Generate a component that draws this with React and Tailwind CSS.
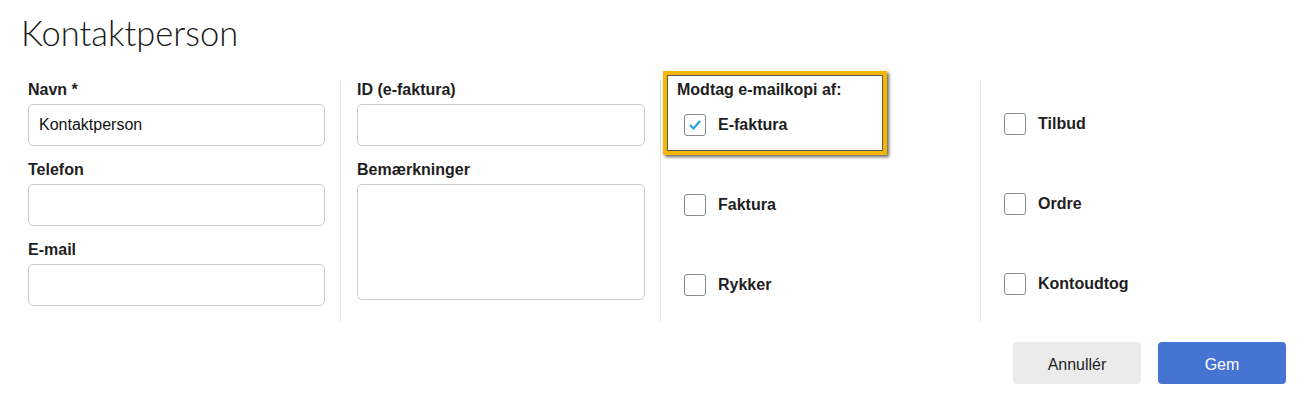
import React, { useState } from "react";

function Check({ checked, onChange, label }) {
  return (
    <label className="flex h-[22px] items-center gap-3 cursor-pointer">
      <span
        onClick={onChange}
        className="flex h-[22px] w-[22px] shrink-0 items-center justify-center rounded-[3px] border-[1.5px] border-[#8a8a8a] bg-white"
      >
        {checked && (
          <svg width="14" height="14" viewBox="0 0 14 14">
            <path d="M2.5 7.5 L5.5 10.5 L11.5 3.5" fill="none" stroke="#29a3e2" strokeWidth="2.2" strokeLinecap="round" strokeLinejoin="round" />
          </svg>
        )}
      </span>
      <span className="text-[16px] font-bold text-[#1e1e1e]">{label}</span>
    </label>
  );
}

function Field({ label, value = "", onChange, area }) {
  return (
    <div className="mb-[14px]">
      <div className="mb-1 text-[16px] font-bold leading-5 text-[#1e1e1e]">{label}</div>
      {area ? (
        <textarea
          value={value}
          onChange={onChange}
          className="block h-[116px] w-full resize-none rounded-[5px] border border-[#cccccc] px-[10px] py-2 text-[16px] outline-none"
        />
      ) : (
        <input
          value={value}
          onChange={onChange}
          className="block h-[42px] w-full rounded-[5px] border border-[#cccccc] px-[10px] text-[16px] text-[#111] outline-none"
        />
      )}
    </div>
  );
}

export default function App() {
  const [form, setForm] = useState({ navn: "Kontaktperson", telefon: "", email: "", id: "", note: "" });
  const [copies, setCopies] = useState({
    efaktura: true,
    faktura: false,
    rykker: false,
    tilbud: false,
    ordre: false,
    kontoudtog: false,
  });

  const toggle = (k) => setCopies({ ...copies, [k]: !copies[k] });
  const set = (k) => (e) => setForm({ ...form, [k]: e.target.value });

  return (
    <div className="h-[409px] w-[1306px] overflow-hidden bg-white font-['Liberation_Sans',Arial,sans-serif] text-[#1e1e1e]">
      {/* Header */}
      <h1 className="pl-[21px] pt-[13px] font-['Lato',sans-serif] text-[34.5px] font-light leading-[40px] text-[#1a1a1a]">
        Kontaktperson
      </h1>

      {/* Columns */}
      <div className="mt-[27px] flex pl-[12px]">
        <div className="h-[242px] w-[328px] pl-4 pr-[15px]">
          <Field label="Navn *" value={form.navn} onChange={set("navn")} />
          <Field label="Telefon" value={form.telefon} onChange={set("telefon")} />
          <Field label="E-mail" value={form.email} onChange={set("email")} />
        </div>

        <div className="h-[242px] w-[320px] border-l border-[#e3e3e3] pl-4 pr-[15px]">
          <Field label="ID (e-faktura)" value={form.id} onChange={set("id")} />
          <Field label="Bemærkninger" value={form.note} onChange={set("note")} area />
        </div>

        <div className="h-[242px] w-[320px] border-l border-[#e3e3e3] pl-[2px]">
          <div className="-mt-[9px] h-[84px] w-[224px] border-4 border-[#f7b500] pl-[10px] pt-[5px] shadow-[inset_0_0_0_1px_rgba(0,0,0,0.65),2px_2px_3px_rgba(0,0,0,0.6)]">
            <div className="text-[16px] font-bold leading-5">Modtag e-mailkopi af:</div>
            <div className="mt-[14px] pl-[7px]">
              <Check label="E-faktura" checked={copies.efaktura} onChange={() => toggle("efaktura")} />
            </div>
          </div>
          <div className="mt-[39px] flex flex-col gap-[58px] pl-[21px]">
            <Check label="Faktura" checked={copies.faktura} onChange={() => toggle("faktura")} />
            <Check label="Rykker" checked={copies.rykker} onChange={() => toggle("rykker")} />
          </div>
        </div>

        <div className="h-[242px] w-[320px] border-l border-[#e3e3e3] pl-[23px] pt-[33px]">
          <div className="flex flex-col gap-[58px]">
            <Check label="Tilbud" checked={copies.tilbud} onChange={() => toggle("tilbud")} />
            <Check label="Ordre" checked={copies.ordre} onChange={() => toggle("ordre")} />
            <Check label="Kontoudtog" checked={copies.kontoudtog} onChange={() => toggle("kontoudtog")} />
          </div>
        </div>
      </div>

      {/* Actions */}
      <div className="mt-[20px] flex justify-end gap-[17px] pr-[20px]">
        <button className="h-[42px] w-[128px] rounded-[4px] bg-[#ebebeb] pt-[3px] text-[16px] text-[#1e1e1e]">Annullér</button>
        <button className="h-[42px] w-[128px] rounded-[4px] bg-[#4674d2] pt-[3px] text-[16px] text-white">Gem</button>
      </div>
    </div>
  );
}
